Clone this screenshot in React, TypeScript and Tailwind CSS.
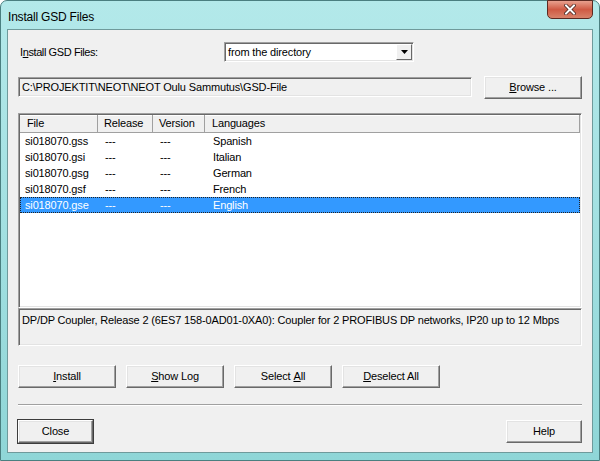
import React from 'react';

const files = [
  { name: 'si018070.gss', lang: 'Spanish' },
  { name: 'si018070.gsi', lang: 'Italian' },
  { name: 'si018070.gsg', lang: 'German' },
  { name: 'si018070.gsf', lang: 'French' },
  { name: 'si018070.gse', lang: 'English' },
];

function Btn({ children, w = 'w-[98px]', def = false }: { children: React.ReactNode; w?: string; def?: boolean }) {
  return (
    <div
      className={`${w} h-[23px] flex items-center justify-center bg-[#f0f0f0] border border-t-white border-l-white border-r-[#696969] border-b-[#696969] shadow-[inset_-1px_-1px_0_#a0a0a0,inset_1px_1px_0_#e3e3e3] ${def ? 'outline outline-1 outline-[#3c3c3c]' : ''}`}
    >
      {children}
    </div>
  );
}

function Sunken({ className, children }: { className: string; children?: React.ReactNode }) {
  return (
    <div
      className={`border border-t-[#a0a0a0] border-l-[#a0a0a0] border-r-white border-b-white shadow-[inset_1px_1px_0_#696969,inset_-1px_-1px_0_#e3e3e3] ${className}`}
    >
      {children}
    </div>
  );
}

export default function App() {
  return (
    <div className="w-[600px] h-[461px] bg-white font-['Liberation_Sans',Arial,sans-serif] text-[11px] tracking-[-0.15px] text-black">
      <div className="w-full h-full flex flex-col rounded-t-[7px] border border-[#4a7f80] bg-gradient-to-b from-[#b3e9ea] via-[#a2e0e1] to-[#8fd6d7]">
        {/* title bar */}
        <div className="h-[28px] flex items-start shrink-0">
          <div className="pl-[7px] pt-[7px] text-[12px] tracking-[-0.2px] text-black">Install GSD Files</div>
          <div className="ml-auto mr-[6px] w-[46px] h-[19px] -mt-px rounded-b-[5px] border border-[#5c2a22] bg-gradient-to-b from-[#e8a08e] via-[#cf5a44] to-[#d8826a] flex items-center justify-center">
            <svg width="12" height="11" viewBox="0 0 12 11">
              <path d="M2 1.5 L10 9.5 M10 1.5 L2 9.5" stroke="#3b1a14" strokeWidth="3.4" strokeLinecap="square" />
              <path d="M2 1.5 L10 9.5 M10 1.5 L2 9.5" stroke="#ffffff" strokeWidth="2" strokeLinecap="square" />
            </svg>
          </div>
        </div>

        {/* client */}
        <div className="mx-[6px] mb-[7px] flex-1 border border-[#6f9a9b] bg-[#f0f0f0] flex flex-col px-[10px]">
          <div className="mt-[12px] h-[20px] flex items-center">
            <div className="w-[206px] pl-[2px] tracking-[-0.4px]">
              I<span className="underline">n</span>stall GSD Files:
            </div>
            <Sunken className="w-[190px] h-[20px] bg-white flex items-center">
              <div className="flex-1 pl-[3px]">from the directory</div>
              <div className="w-[16px] h-[16px] mr-px bg-[#f0f0f0] border border-t-white border-l-white border-r-[#696969] border-b-[#696969] flex items-center justify-center">
                <svg width="7" height="4" viewBox="0 0 7 4"><path d="M0 0 H7 L3.5 4 Z" fill="#000" /></svg>
              </div>
            </Sunken>
          </div>

          <div className="mt-[14px] h-[22px] flex items-center">
            <Sunken className="w-[454px] h-[20px] bg-[#f0f0f0] flex items-center pl-[3px]">
              C:\PROJEKTIT\NEOT\NEOT Oulu Sammutus\GSD-File
            </Sunken>
            <div className="ml-auto">
              <Btn>
                <span className="underline">B</span>rowse ...
              </Btn>
            </div>
          </div>

          {/* list */}
          <Sunken className="mt-[15px] h-[195px] bg-white p-px flex flex-col">
            <div className="h-[18px] flex bg-[#f0f0f0] border-b border-[#a0a0a0] shadow-[inset_0_1px_0_#fff]">
              <div className="w-[78px] pl-[7px] border-r border-[#a0a0a0] flex items-center">File</div>
              <div className="w-[55px] pl-[6px] border-r border-[#a0a0a0] flex items-center">Release</div>
              <div className="w-[52px] pl-[6px] border-r border-[#a0a0a0] flex items-center">Version</div>
              <div className="flex-1 pl-[7px] flex items-center border-r border-[#a0a0a0]">Languages</div>
            </div>
            {files.map((f, i) => {
              const sel = i === files.length - 1;
              return (
                <div
                  key={f.name}
                  className={`h-[16px] flex items-center ${sel ? 'bg-[#3399ff] text-white border border-dotted border-[#222]' : 'border border-transparent'}`}
                >
                  <div className="w-[78px] pl-[4px]">{f.name}</div>
                  <div className="w-[55px] pl-[6px]">---</div>
                  <div className="w-[52px] pl-[6px]">---</div>
                  <div className="flex-1 pl-[7px]">{f.lang}</div>
                </div>
              );
            })}
          </Sunken>
          <Sunken className="h-[38px] bg-[#f0f0f0] pl-[3px] pt-[3px]">
            DP/DP Coupler, Release 2 (6ES7 158-0AD01-0XA0): Coupler for 2 PROFIBUS DP networks, IP20 up to 12 Mbps
          </Sunken>

          <div className="mt-[19px] flex gap-[10px]">
            <Btn>
              <span className="underline">I</span>nstall
            </Btn>
            <Btn>
              <span className="underline">S</span>how Log
            </Btn>
            <Btn>
              Select <span className="underline ml-[3px]">A</span>ll
            </Btn>
            <Btn>
              <span className="underline">D</span>eselect All
            </Btn>
          </div>

          <div className="mt-[16px] h-[2px] border-t border-[#a0a0a0] border-b border-b-white" />

          <div className="mt-[14px] flex justify-between">
            <Btn w="w-[75px]" def>
              Close
            </Btn>
            <Btn w="w-[76px]">Help</Btn>
          </div>
        </div>
      </div>
    </div>
  );
}
